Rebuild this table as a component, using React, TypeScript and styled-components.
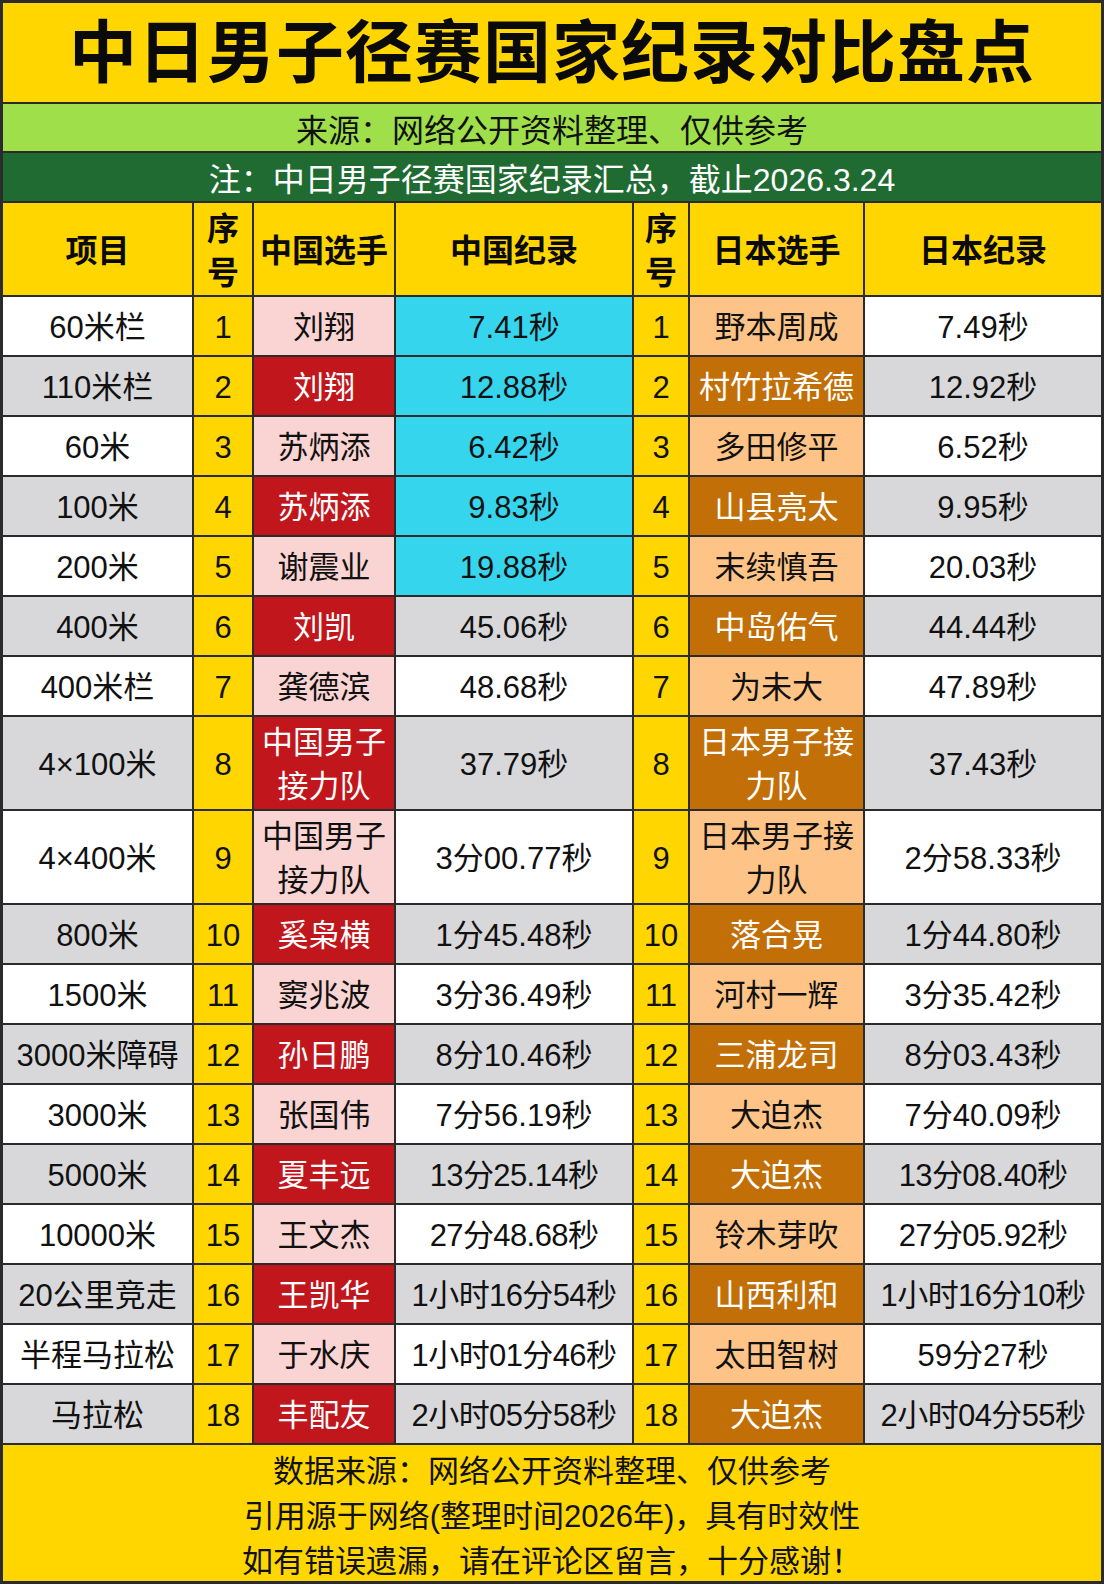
import React from "react";
import styled, { createGlobalStyle } from "styled-components";

const GlobalStyle = createGlobalStyle`
  html, body { margin: 0; padding: 0; background: #ffffff; }
  body { font-family: "Liberation Sans", "Noto Sans CJK SC", sans-serif; }
  * { box-sizing: border-box; }
`;

const C = {
  line: "#2b2b2b",
  yellow: "#FFD600",
  lime: "#9FE04A",
  forest: "#1F6B32",
  pink: "#F9D4D2",
  red: "#C2161D",
  cyan: "#36D5EE",
  peach: "#FEC487",
  amber: "#C26F08",
  gray: "#D8D8DA",
  white: "#FFFFFF",
};

const Board = styled.div`
  width: 1104px;
  border: 3px solid ${C.line};
  background: ${C.line};
  display: flex;
  flex-direction: column;
  gap: 2px;
  font-family: "Liberation Sans", "Noto Sans CJK SC", sans-serif;
  color: #111;
`;

const Title = styled.h1`
  margin: 0;
  height: 99px;
  padding-bottom: 10px;
  background: ${C.yellow};
  display: flex;
  align-items: center;
  justify-content: center;
  font-size: 68px;
  font-weight: 700;
  letter-spacing: 1px;
  color: #0a0a0a;
`;

const Banner = styled.div<{ $bg: string; $fg: string; $h: number }>`
  height: ${(p) => p.$h}px;
  background: ${(p) => p.$bg};
  color: ${(p) => p.$fg};
  display: flex;
  align-items: center;
  justify-content: center;
  font-size: 32px;
  font-weight: 400;
`;

const Table = styled.div`
  display: grid;
  grid-template-columns: 189px 58px 140px 236px 54px 173px 236px;
  gap: 2px;
`;

const HeadCell = styled.div`
  background: ${C.yellow};
  min-height: 92px;
  padding: 4px 0 0;
  display: flex;
  align-items: center;
  justify-content: center;
  text-align: center;
  font-size: 32px;
  font-weight: 700;
  line-height: 44px;
  color: #0a0a0a;
`;

const Cell = styled.div<{ $bg: string; $light?: boolean }>`
  background: ${(p) => p.$bg};
  color: ${(p) => (p.$light ? "#ffffff" : "#111111")};
  min-height: 58px;
  padding: 4px 0 0;
  display: flex;
  align-items: center;
  justify-content: center;
  text-align: center;
  font-size: 31px;
  line-height: 44px;
  white-space: normal;
  word-break: break-all;
  overflow: hidden;
`;

const Nowrap = styled.span`
  white-space: nowrap;
  letter-spacing: -0.6px;
`;

const Footer = styled.div`
  background: ${C.yellow};
  height: 136px;
  padding-top: 6px;
  display: flex;
  flex-direction: column;
  align-items: center;
  justify-content: center;
  font-size: 31px;
  line-height: 45px;
  color: #111;
`;

type Rec = {
  event: string;
  cn: string;
  cnRec: string;
  jp: string;
  jpRec: string;
};

const rows: Rec[] = [
  { event: "60米栏", cn: "刘翔", cnRec: "7.41秒", jp: "野本周成", jpRec: "7.49秒" },
  { event: "110米栏", cn: "刘翔", cnRec: "12.88秒", jp: "村竹拉希德", jpRec: "12.92秒" },
  { event: "60米", cn: "苏炳添", cnRec: "6.42秒", jp: "多田修平", jpRec: "6.52秒" },
  { event: "100米", cn: "苏炳添", cnRec: "9.83秒", jp: "山县亮太", jpRec: "9.95秒" },
  { event: "200米", cn: "谢震业", cnRec: "19.88秒", jp: "末续慎吾", jpRec: "20.03秒" },
  { event: "400米", cn: "刘凯", cnRec: "45.06秒", jp: "中岛佑气", jpRec: "44.44秒" },
  { event: "400米栏", cn: "龚德滨", cnRec: "48.68秒", jp: "为未大", jpRec: "47.89秒" },
  { event: "4×100米", cn: "中国男子接力队", cnRec: "37.79秒", jp: "日本男子接力队", jpRec: "37.43秒" },
  { event: "4×400米", cn: "中国男子接力队", cnRec: "3分00.77秒", jp: "日本男子接力队", jpRec: "2分58.33秒" },
  { event: "800米", cn: "奚枭横", cnRec: "1分45.48秒", jp: "落合晃", jpRec: "1分44.80秒" },
  { event: "1500米", cn: "窦兆波", cnRec: "3分36.49秒", jp: "河村一辉", jpRec: "3分35.42秒" },
  { event: "3000米障碍", cn: "孙日鹏", cnRec: "8分10.46秒", jp: "三浦龙司", jpRec: "8分03.43秒" },
  { event: "3000米", cn: "张国伟", cnRec: "7分56.19秒", jp: "大迫杰", jpRec: "7分40.09秒" },
  { event: "5000米", cn: "夏丰远", cnRec: "13分25.14秒", jp: "大迫杰", jpRec: "13分08.40秒" },
  { event: "10000米", cn: "王文杰", cnRec: "27分48.68秒", jp: "铃木芽吹", jpRec: "27分05.92秒" },
  { event: "20公里竞走", cn: "王凯华", cnRec: "1小时16分54秒", jp: "山西利和", jpRec: "1小时16分10秒" },
  { event: "半程马拉松", cn: "于水庆", cnRec: "1小时01分46秒", jp: "太田智树", jpRec: "59分27秒" },
  { event: "马拉松", cn: "丰配友", cnRec: "2小时05分58秒", jp: "大迫杰", jpRec: "2小时04分55秒" },
];

const headers = ["项目", "序号", "中国选手", "中国纪录", "序号", "日本选手", "日本纪录"];

export default function App() {
  return (
    <>
      <GlobalStyle />
      <Board>
        <Title>中日男子径赛国家纪录对比盘点</Title>
        <Banner $bg={C.lime} $fg="#111" $h={47}>
          来源：网络公开资料整理、仅供参考
        </Banner>
        <Banner $bg={C.forest} $fg="#ffffff" $h={48}>
          注：中日男子径赛国家纪录汇总，截止2026.3.24
        </Banner>
        <Table>
          {headers.map((h, i) => (
            <HeadCell key={i}>{h}</HeadCell>
          ))}
          {rows.map((r, i) => {
            const n = i + 1;
            const even = n % 2 === 0;
            const plain = even ? C.gray : C.white;
            return (
              <React.Fragment key={n}>
                <Cell $bg={plain}>{r.event}</Cell>
                <Cell $bg={C.yellow}>{n}</Cell>
                <Cell $bg={even ? C.red : C.pink} $light={even}>
                  {r.cn}
                </Cell>
                <Cell $bg={n <= 5 ? C.cyan : plain}>
                  {r.cnRec.length > 8 ? <Nowrap>{r.cnRec}</Nowrap> : r.cnRec}
                </Cell>
                <Cell $bg={C.yellow}>{n}</Cell>
                <Cell $bg={even ? C.amber : C.peach} $light={even}>
                  {r.jp}
                </Cell>
                <Cell $bg={plain}>
                  {r.jpRec.length > 8 ? <Nowrap>{r.jpRec}</Nowrap> : r.jpRec}
                </Cell>
              </React.Fragment>
            );
          })}
        </Table>
        <Footer>
          <div>数据来源：网络公开资料整理、仅供参考</div>
          <div>引用源于网络(整理时间2026年)，具有时效性</div>
          <div>如有错误遗漏，请在评论区留言，十分感谢！</div>
        </Footer>
      </Board>
    </>
  );
}
